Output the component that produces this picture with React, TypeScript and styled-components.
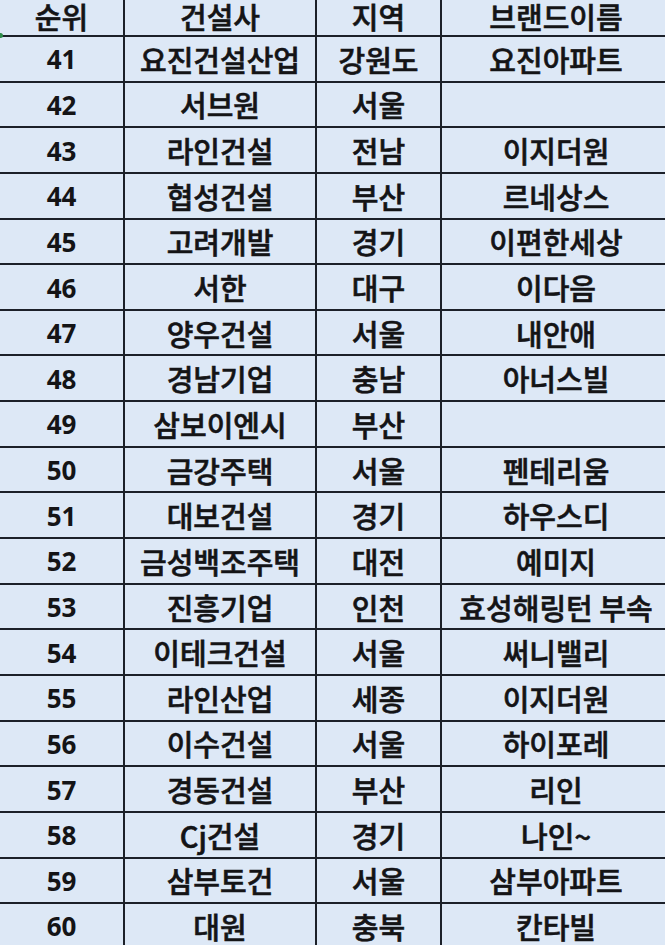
import React from 'react';
import styled, { createGlobalStyle } from 'styled-components';

const GlobalStyle = createGlobalStyle`
  html, body {
    margin: 0;
    padding: 0;
    background: #dde8f6;
    overflow: hidden;
  }
`;

const rows: [number, string, string, string][] = [
  [41, '요진건설산업', '강원도', '요진아파트'],
  [42, '서브원', '서울', ''],
  [43, '라인건설', '전남', '이지더원'],
  [44, '협성건설', '부산', '르네상스'],
  [45, '고려개발', '경기', '이편한세상'],
  [46, '서한', '대구', '이다음'],
  [47, '양우건설', '서울', '내안애'],
  [48, '경남기업', '충남', '아너스빌'],
  [49, '삼보이엔시', '부산', ''],
  [50, '금강주택', '서울', '펜테리움'],
  [51, '대보건설', '경기', '하우스디'],
  [52, '금성백조주택', '대전', '예미지'],
  [53, '진흥기업', '인천', '효성해링턴 부속'],
  [54, '이테크건설', '서울', '써니밸리'],
  [55, '라인산업', '세종', '이지더원'],
  [56, '이수건설', '서울', '하이포레'],
  [57, '경동건설', '부산', '리인'],
  [58, 'Cj건설', '경기', '나인~'],
  [59, '삼부토건', '서울', '삼부아파트'],
  [60, '대원', '충북', '칸타빌'],
];

const Viewport = styled.div`
  position: relative;
  width: 665px;
  height: 945px;
  overflow: hidden;
`;

// header row is cropped at the top of the shot, so it only gets 35px
const Sheet = styled.div`
  display: grid;
  grid-template-columns: 123px 190px 123px 228px;
  grid-template-rows: 35px;
  grid-auto-rows: 43.65px;
  gap: 2px;
  background: #1c2029;
  width: 670px;
  padding-bottom: 2px;
`;

const Cell = styled.div<{ $head?: boolean }>`
  display: flex;
  align-items: center;
  justify-content: center;
  background: #dde8f6;
  color: #141416;
  font-family: 'Noto Sans CJK KR', 'Noto Sans', sans-serif;
  font-weight: 500;
  font-size: 29px;
  line-height: 1;
  white-space: nowrap;
  -webkit-text-stroke: 0.6px #141416;
  padding-top: ${p => (p.$head ? '0' : '1px')};
  padding-bottom: ${p => (p.$head ? '3px' : '0')};
`;

const Num = styled.span`
  font-family: 'Open Sans', 'Noto Sans', sans-serif;
  font-weight: 700;
  font-size: 26px;
  -webkit-text-stroke: 0;
`;

const Marker = styled.div`
  position: absolute;
  left: -2px;
  top: 33px;
  width: 5px;
  height: 5px;
  border-radius: 50%;
  background: #2e8b4a;
`;

export default function App() {
  return (
    <Viewport>
      <GlobalStyle />
      <Sheet>
        <Cell $head>순위</Cell>
        <Cell $head>건설사</Cell>
        <Cell $head>지역</Cell>
        <Cell $head>브랜드이름</Cell>
        {rows.map(([rank, company, region, brand]) => (
          <React.Fragment key={rank}>
            <Cell>
              <Num>{rank}</Num>
            </Cell>
            <Cell>{company}</Cell>
            <Cell>{region}</Cell>
            <Cell>{brand}</Cell>
          </React.Fragment>
        ))}
      </Sheet>
      <Marker />
    </Viewport>
  );
}
